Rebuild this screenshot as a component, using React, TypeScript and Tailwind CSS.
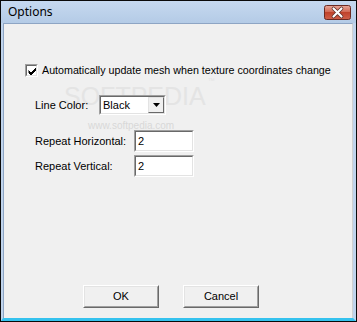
import React from "react";

function CloseIcon() {
  return (
    <svg width="27" height="15" viewBox="0 0 27 15">
      <defs>
        <linearGradient id="cg" x1="0" y1="0" x2="0" y2="1">
          <stop offset="0" stopColor="#e8a89a" />
          <stop offset="0.45" stopColor="#d26a55" />
          <stop offset="0.5" stopColor="#c0432c" />
          <stop offset="1" stopColor="#d0604a" />
        </linearGradient>
      </defs>
      <rect x="0.5" y="0.5" width="26" height="14" rx="2" fill="url(#cg)" stroke="#6b2a22" />
      <path d="M9.5 3.5 L17.5 11.5 M17.5 3.5 L9.5 11.5" stroke="#5a2a24" strokeWidth="3.6" strokeLinecap="round" />
      <path d="M9.5 3.5 L17.5 11.5 M17.5 3.5 L9.5 11.5" stroke="#ffffff" strokeWidth="2.2" strokeLinecap="round" />
    </svg>
  );
}

function Sunken({ className, children }: { className: string; children?: React.ReactNode }) {
  return (
    <div className={`border border-t-[#a0a0a0] border-l-[#a0a0a0] border-r-white border-b-white ${className}`}>
      <div className="w-full h-full border border-t-[#696969] border-l-[#696969] border-r-[#e3e3e3] border-b-[#e3e3e3] bg-white">
        {children}
      </div>
    </div>
  );
}

function Btn({ label }: { label: string }) {
  return (
    <div className="w-[76px] h-[23px] border border-t-white border-l-white border-r-[#696969] border-b-[#696969] bg-[#f0f0f0]">
      <div className="w-full h-full border border-t-[#e3e3e3] border-l-[#e3e3e3] border-r-[#a0a0a0] border-b-[#a0a0a0] flex items-center justify-center text-[11px] text-black">
        {label}
      </div>
    </div>
  );
}

export default function App() {
  return (
    <div
      className="w-[357px] h-[322px] flex flex-col bg-[#0a0a0a] relative overflow-hidden"
      style={{ fontFamily: '"Liberation Sans", Arial, sans-serif' }}
    >
      <div className="flex flex-col flex-1 m-[1px] mb-[1px] bg-[#c0d4ec]">
        {/* Title bar */}
        <div className="h-[22px] flex items-center justify-between pl-[7px] pr-[5px] bg-gradient-to-b from-[#c6d9f0] to-[#b4cbe6]">
          <span className="text-[12px] text-black" style={{ fontFamily: '"Noto Sans", "Open Sans", sans-serif' }}>Options</span>
          <div className="mt-[1px]">
            <CloseIcon />
          </div>
        </div>
        {/* Body */}
        <div className="flex-1 flex border-l-[2px] border-l-[#c0d4ec] border-r-[3px] border-r-[#c0d4ec] border-b-[3px] border-b-[#35c2ee]">
          <div className="flex-1 bg-[#f0f0f0] border-t border-t-[#8ea5c4] border-l border-l-[#8ea5c4] border-r border-r-[#d0d0d0] relative text-[11px] text-black">
            {/* watermark */}
            <div className="absolute left-[60px] top-[60px] text-[25px] leading-none text-[#e4e4e4] pointer-events-none" style={{ fontFamily: '"Liberation Sans", sans-serif' }}>
              SOFTPEDIA<sup className="text-[7px] align-top ml-[2px]">™</sup>
            </div>
            <div className="absolute left-[84px] top-[94px] text-[10px] text-[#d8d8d8] pointer-events-none">
              www.softpedia.com
            </div>
            {/* checkbox row */}
            <div className="relative flex items-center pl-[21px] pt-[38px]">
              <Sunken className="w-[13px] h-[13px]">
                <svg width="11" height="11" viewBox="0 0 11 11" className="block">
                  <path d="M1.5 4.5 L4 7 L9 2 M1.5 5.5 L4 8 L9 3 M1.5 6.5 L4 9 L9 4" stroke="black" strokeWidth="1" fill="none" />
                </svg>
              </Sunken>
              <span className="ml-[4px] text-[10.7px]">Automatically update mesh when texture coordinates change</span>
            </div>
            {/* line color */}
            <div className="relative flex items-center pl-[31px] mt-[17px]">
              <span className="w-[64px]">Line Color:</span>
              <Sunken className="w-[67px] h-[20px]">
                <div className="flex h-full">
                  <span className="flex-1 pl-[2px] leading-[16px]">Black</span>
                  <div className="w-[16px] h-full bg-[#f0f0f0] border border-t-[#e3e3e3] border-l-[#e3e3e3] border-r-[#696969] border-b-[#696969] flex items-center justify-center">
                    <svg width="7" height="4" viewBox="0 0 7 4"><path d="M0 0 H7 L3.5 4 Z" fill="black" /></svg>
                  </div>
                </div>
              </Sunken>
            </div>
            {/* repeat horizontal */}
            <div className="relative flex items-center pl-[31px] mt-[15px]">
              <span className="w-[99px]">Repeat Horizontal:</span>
              <Sunken className="w-[60px] h-[22px]">
                <span className="block pl-[2px] pt-[1px] leading-[16px]">2</span>
              </Sunken>
            </div>
            <div className="relative flex items-center pl-[31px] mt-[3px]">
              <span className="w-[99px]">Repeat Vertical:</span>
              <Sunken className="w-[60px] h-[22px]">
                <span className="block pl-[2px] pt-[1px] leading-[16px]">2</span>
              </Sunken>
            </div>
            {/* buttons */}
            <div className="absolute left-[79px] top-[261px] flex gap-[24px]">
              <Btn label="OK" />
              <Btn label="Cancel" />
            </div>
          </div>
        </div>
      </div>
    </div>
  );
}
